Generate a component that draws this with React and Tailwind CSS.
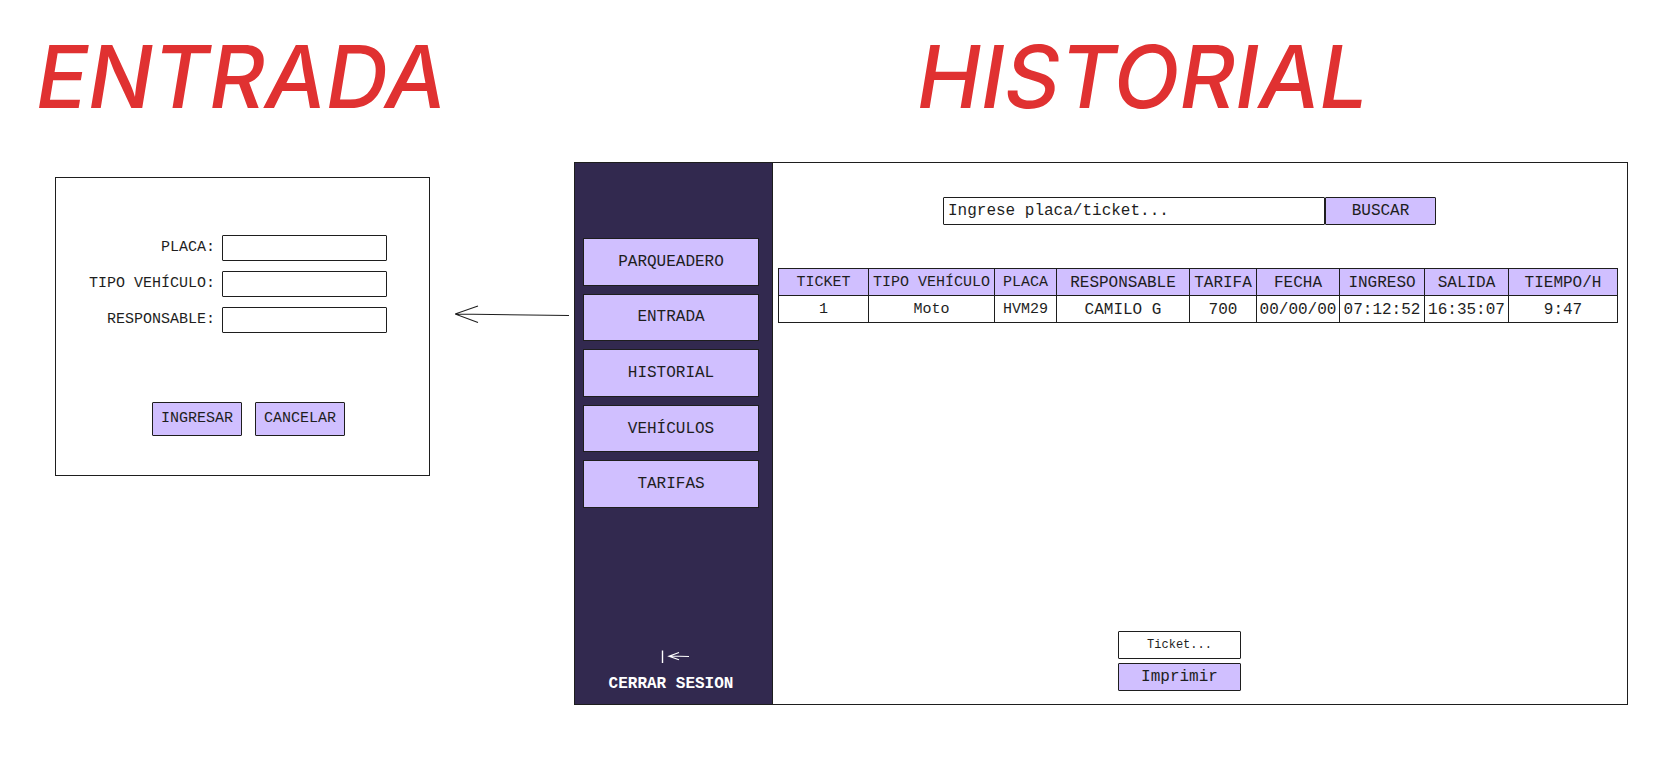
const MENU = ["PARQUEADERO", "ENTRADA", "HISTORIAL", "VEHÍCULOS", "TARIFAS"];

const FIELDS = [
  { id: "placa", label: "PLACA:" },
  { id: "tipo", label: "TIPO VEHÍCULO:" },
  { id: "responsable", label: "RESPONSABLE:" },
];

const COLUMNS = [
  { title: "TICKET", value: "1", width: "w-[90px]", size: "text-[15px]" },
  { title: "TIPO VEHÍCULO", value: "Moto", width: "w-[126px]", size: "text-[15px]" },
  { title: "PLACA", value: "HVM29", width: "w-[62px]", size: "text-[15px]" },
  { title: "RESPONSABLE", value: "CAMILO G", width: "w-[133px]", size: "text-base" },
  { title: "TARIFA", value: "700", width: "w-[67px]", size: "text-base" },
  { title: "FECHA", value: "00/00/00", width: "w-[83px]", size: "text-base" },
  { title: "INGRESO", value: "07:12:52", width: "w-[85px]", size: "text-base" },
  { title: "SALIDA", value: "16:35:07", width: "w-[84px]", size: "text-base" },
  { title: "TIEMPO/H", value: "9:47", width: "w-[109px]", size: "text-base" },
];

function Title({ children }) {
  return (
    <h1 className="font-['Inter','Open_Sans',sans-serif] text-[86px] leading-[88px] font-medium whitespace-nowrap text-[#e03131] italic">
      {children}
    </h1>
  );
}

function EntryForm() {
  return (
    <form
      className="ml-[19px] flex h-[299px] w-[375px] flex-col border border-[#1e1e1e] px-[33px] pt-[57px]"
      onSubmit={(e) => e.preventDefault()}
    >
      <div className="grid grid-cols-[auto_165px] items-center justify-start gap-x-[7px] gap-y-[10px]">
        {FIELDS.map((f) => (
          <div key={f.id} className="contents">
            <label htmlFor={f.id} className="text-right text-[15px] leading-[26px] whitespace-nowrap">
              {f.label}
            </label>
            <input id={f.id} className="h-[26px] w-full rounded-[1px] border border-[#1e1e1e] px-1" />
          </div>
        ))}
      </div>
      <div className="mt-[69px] flex justify-center gap-[13px] pl-3">
        <button type="submit" className="h-[34px] w-[90px] rounded-[1px] border border-[#1e1e1e] bg-[#d0bfff] text-[15px]">
          INGRESAR
        </button>
        <button type="button" className="h-[34px] w-[90px] rounded-[1px] border border-[#1e1e1e] bg-[#d0bfff] text-[15px]">
          CANCELAR
        </button>
      </div>
    </form>
  );
}

function Sidebar() {
  return (
    <aside className="flex w-[198px] shrink-0 flex-col border-r border-[#1e1e1e] bg-[#32294f] pt-[75px] pr-[13px] pb-2 pl-2">
      <nav className="flex h-[270px] flex-col gap-2">
        {MENU.map((item) => (
          <button key={item} type="button" className="flex-1 border border-[#1e1e1e] bg-[#d0bfff]">
            {item}
          </button>
        ))}
      </nav>
      <button type="button" className="mt-auto flex flex-col items-center gap-2 font-bold text-white">
        <svg width="36" height="14" viewBox="-8 0 36 14" fill="none" stroke="currentColor" aria-hidden="true">
          <path d="M1.5 0.5V13" strokeWidth="1.4" />
          <path d="M28 6.5L8.500 6M18 2.500L8 6.200L18 9.800" strokeWidth="1.2" />
        </svg>
        <span className="leading-6">CERRAR SESION</span>
      </button>
    </aside>
  );
}

function HistoryPanel() {
  return (
    <div className="flex h-[543px] border border-[#1e1e1e]">
      <Sidebar />
      <div className="flex min-w-0 flex-1 flex-col pt-[34px] pr-[10px] pb-[13px] pl-[5px]">
        <form className="flex justify-center pr-4" onSubmit={(e) => e.preventDefault()}>
          <input
            aria-label="Ingrese placa o ticket"
            placeholder="Ingrese placa/ticket..."
            className="h-7 w-[382px] rounded-[1px] border border-[#1e1e1e] px-1 placeholder:text-[#1e1e1e] placeholder:opacity-100"
          />
          <button type="submit" className="h-7 w-[111px] rounded-[1px] border border-[#1e1e1e] bg-[#d0bfff]">
            BUSCAR
          </button>
        </form>
        <table className="mt-[43px] w-full table-fixed border-collapse text-center">
          <thead>
            <tr className="bg-[#d0bfff]">
              {COLUMNS.map((c) => (
                <th
                  key={c.title}
                  scope="col"
                  className={`${c.width} ${c.size} border border-[#1e1e1e] px-0 pt-[2px] pb-0 leading-[24px] font-normal whitespace-nowrap`}
                >
                  {c.title}
                </th>
              ))}
            </tr>
          </thead>
          <tbody>
            <tr>
              {COLUMNS.map((c) => (
                <td
                  key={c.title}
                  className={`${c.size} border border-[#1e1e1e] px-0 pt-[2px] pb-0 leading-[24px] whitespace-nowrap`}
                >
                  {c.value}
                </td>
              ))}
            </tr>
          </tbody>
        </table>
        <div className="mt-auto flex flex-col items-center gap-1 pr-9">
          <input
            aria-label="Ticket"
            placeholder="Ticket..."
            className="h-7 w-[123px] rounded-[1px] border border-[#1e1e1e] text-center text-xs placeholder:text-[#1e1e1e] placeholder:opacity-100"
          />
          <button type="button" className="h-7 w-[123px] rounded-[1px] border border-[#1e1e1e] bg-[#d0bfff]">
            Imprimir
          </button>
        </div>
      </div>
    </div>
  );
}

export default function App() {
  return (
    <main className="flex min-h-screen items-start bg-white pt-[33px] pr-[26px] pb-10 pl-9 font-['Liberation_Mono',monospace] text-base text-[#1e1e1e]">
      <section className="flex w-[395px] shrink-0 flex-col gap-[56px]">
        <Title>ENTRADA</Title>
        <EntryForm />
      </section>
      <svg
        className="mt-[270px] mr-1 ml-6 shrink-0"
        width="115"
        height="20"
        viewBox="0 0 115 20"
        fill="none"
        stroke="#1e1e1e"
        strokeWidth="1.1"
        aria-hidden="true"
      >
        <path d="M114 12.500L0 11M23 3L0 11L23 19.500" />
      </svg>
      <section className="flex min-w-0 flex-1 flex-col gap-[41px]">
        <div className="pl-[343px]">
          <Title>HISTORIAL</Title>
        </div>
        <HistoryPanel />
      </section>
    </main>
  );
}
